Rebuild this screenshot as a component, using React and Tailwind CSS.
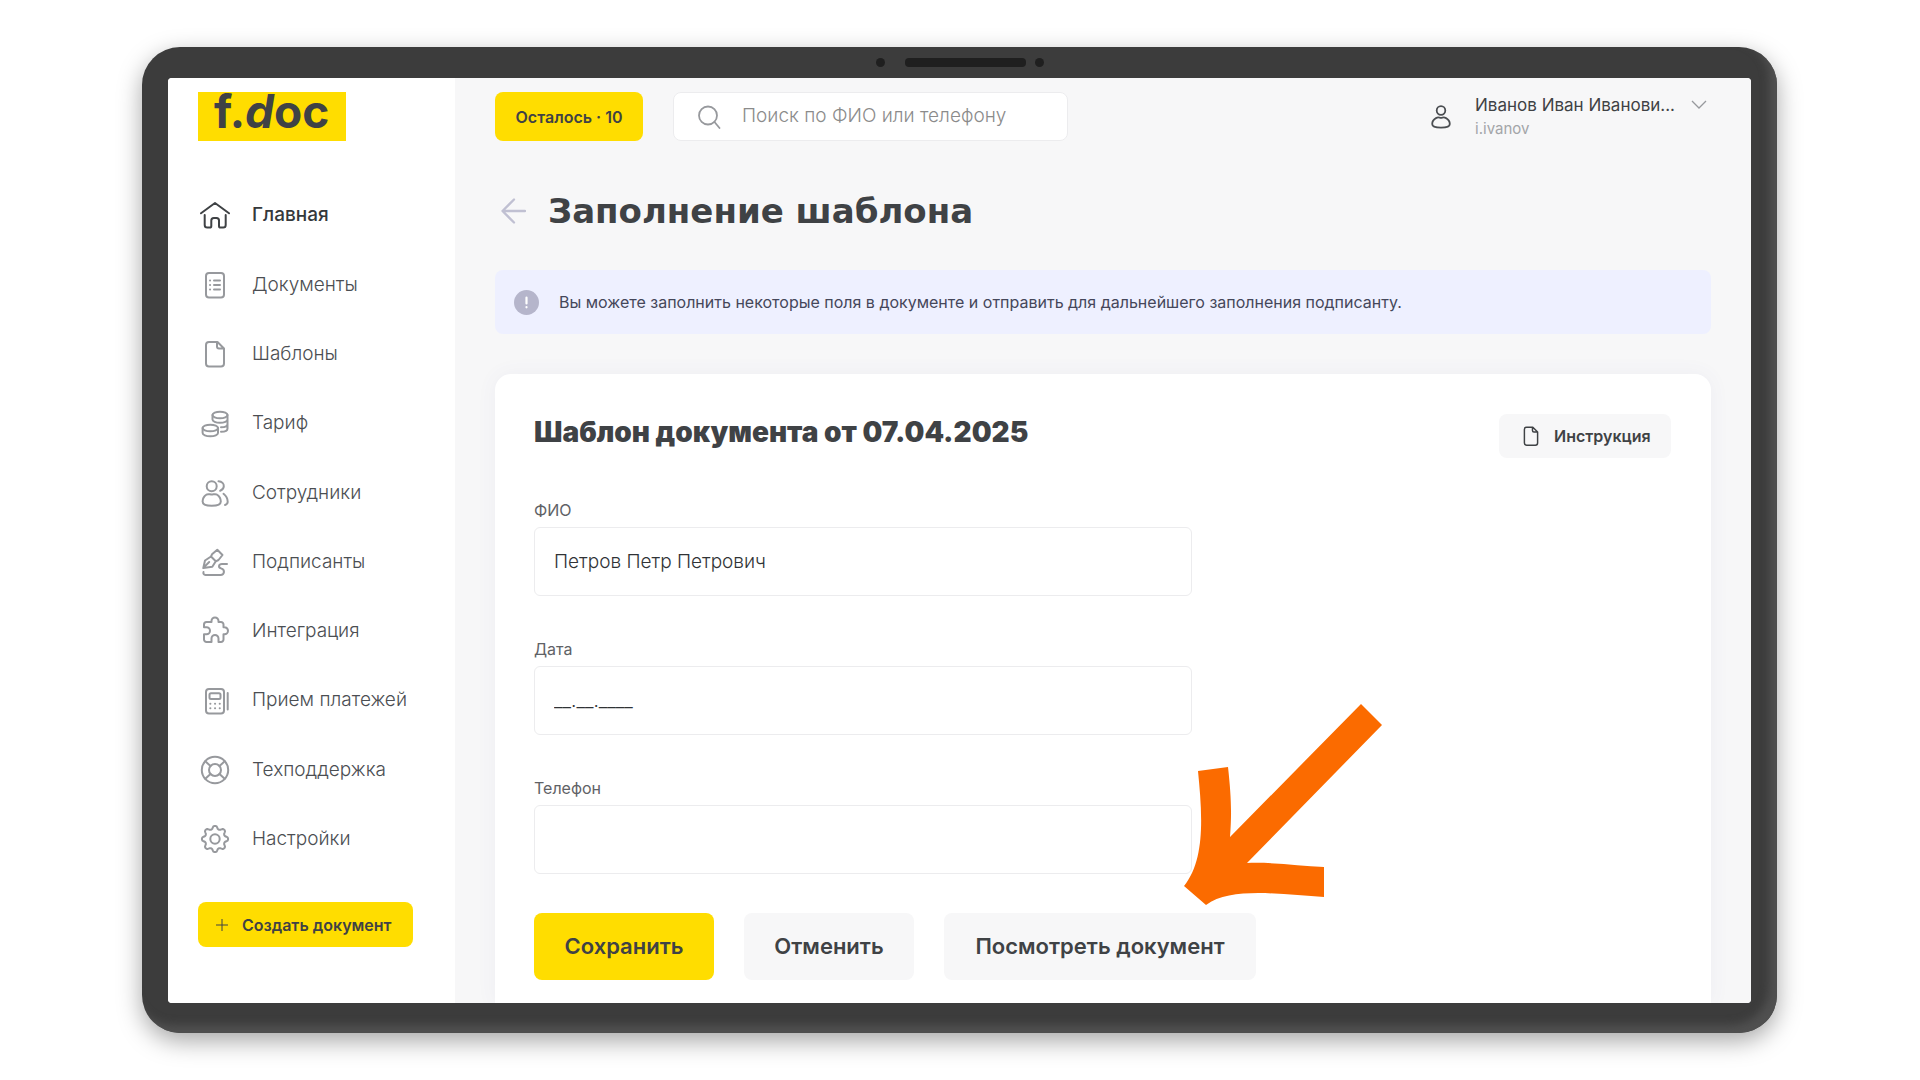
import React from "react";

const gearPath = (() => {
  const points = [];
  for (let i = 0; i < 96; i++) {
    const t = (i / 96) * Math.PI * 2;
    const wave = Math.cos(8 * t);
    const r = 11.6 + 1.5 * Math.sign(wave) * Math.pow(Math.abs(wave), 0.55);
    points.push(`${(15 + r * Math.sin(t)).toFixed(2)} ${(15 - r * Math.cos(t)).toFixed(2)}`);
  }
  return `M${points.join("L")}Z`;
})();

const filePath =
  "M9 3h8.5L24 9.500V24.500a3 3 0 0 1-3 3H9a3 3 0 0 1-3-3V6a3 3 0 0 1 3-3zM17 3v4.500a2 2 0 0 0 2 2h5";

const icons = {
  home: (
    <path d="M1 12.300 15 2l14 10.300M4.700 14v10a2.500 2.500 0 0 0 2.500 2.500h2.500a1.600 1.600 0 0 0 1.600-1.600v-5.400a2.500 2.500 0 0 1 2.500-2.500h2.700a2.500 2.500 0 0 1 2.500 2.500v5.400a1.600 1.600 0 0 0 1.600 1.600h2.600a2.500 2.500 0 0 0 2.500-2.500V14" />
  ),
  docs: (
    <>
      <rect x="6" y="3" width="18" height="24.500" rx="3" />
      <path d="M14 10.500h6M14 15h6M14 19.500h6M10 10.500h.1M10 15h.1M10 19.500h.1" />
    </>
  ),
  file: <path d={filePath} />,
  coins: (
    <>
      <ellipse cx="20" cy="6" rx="7.500" ry="3.300" />
      <path d="M12.500 6v4.500c0 1.800 3.300 3.300 7.500 3.300s7.500-1.500 7.500-3.300V6M27.500 10.500V15c0 1.800-2.500 3.300-6.500 3.300M27.500 15v4.500c0 1.800-2.500 3.300-6.500 3.300" />
      <ellipse cx="10.300" cy="19" rx="7.700" ry="3.300" />
      <path d="M2.600 19v5c0 1.800 3.400 3.300 7.700 3.300s7.700-1.500 7.700-3.300v-5" />
    </>
  ),
  users: (
    <>
      <circle cx="11.700" cy="8.300" r="5" />
      <path d="M11.700 16.500c-2-.1-4-1-5.500.2C4 18.300 2.600 21 2.600 23.500c0 3 4 4.300 9.100 4.300s9.100-1.300 9.100-4.300c0-2.500-1.400-5.200-3.600-6.800-1.500-1.200-3.500-.3-5.500-.2zM18.500 3.300c3.500.3 5.500 2.500 5.300 5-.1 2-1.500 3.700-3.600 4.500M23.500 15.800c2.500 2 4.200 5 4.200 8 0 1.500-1 2.700-2.700 3.200" />
    </>
  ),
  sign: (
    <>
      <path d="M3.300 21 5 13.500l6-4 4.800 4.800-3.500 5.500zM3.600 20.600l5.600-5.600M11 9.500l1-2.200 5.300-4.600L22.500 8l-4 5-2.700 1.300" />
      <path d="M27 17h-5c-3.500 0-4 3.400-1 4.400 4.500 1.400 3.500 6.600-.5 6.600H5.500C3.800 28 3 26.500 3.500 25" />
    </>
  ),
  puzzle: (
    <path d="M6.500 6h5V5a3.500 3.500 0 0 1 7 0v1H21a2.500 2.500 0 0 1 2.500 2.500v2.800h1a3.500 3.500 0 0 1 0 7h-1v5.200A2.500 2.500 0 0 1 21 26h-2.500v-3.500a3.500 3.500 0 0 0-7 0V26h-5A2.500 2.500 0 0 1 4 23.500v-5.200h2.500a3.500 3.500 0 0 0 0-7H4V8.500A2.500 2.500 0 0 1 6.500 6z" />
  ),
  terminal: (
    <>
      <rect x="6" y="3" width="18" height="24.500" rx="3" />
      <rect x="9.500" y="7.300" width="11" height="5.600" rx="1.500" />
      <path d="M10.300 17.700h.1M15 17.700h.1M19.700 17.700h.1M10.300 22.300h.1M15 22.300h.1M19.700 22.300h.1M27.700 7v16.500" />
    </>
  ),
  buoy: (
    <>
      <circle cx="15" cy="15" r="13.200" />
      <circle cx="15" cy="15" r="6" />
      <path d="m5.300 6.300 5.200 4.800M24.700 6.300l-5.200 4.800M5.300 23.700l5.200-4.800M24.700 23.700l-5.200-4.800" />
    </>
  ),
  gear: (
    <>
      <path d={gearPath} />
      <circle cx="15" cy="15" r="4.700" />
    </>
  ),
};

function Icon({ name, className }) {
  return (
    <svg
      viewBox="0 0 30 30"
      className={className}
      fill="none"
      stroke="currentColor"
      strokeWidth="2"
      strokeLinecap="round"
      strokeLinejoin="round"
      aria-hidden="true"
    >
      {icons[name]}
    </svg>
  );
}

const nav = [
  ["home", "Главная"],
  ["docs", "Документы"],
  ["file", "Шаблоны"],
  ["coins", "Тариф"],
  ["users", "Сотрудники"],
  ["sign", "Подписанты"],
  ["puzzle", "Интеграция"],
  ["terminal", "Прием платежей"],
  ["buoy", "Техподдержка"],
  ["gear", "Настройки"],
];

function Sidebar() {
  return (
    <aside className="w-[287px] shrink-0 bg-white pl-[30px] pt-[14px]">
      <a
        href="#"
        className="block h-[49px] w-[148px] bg-[#ffdd00] pl-4 text-[46px] leading-[38px] font-bold text-[#3f4245]"
      >
        f.<span className="italic">d</span>oc
      </a>
      <nav className="mt-10 grid h-[693px] auto-rows-fr">
        {nav.map(([icon, label], i) => (
          <a
            key={label}
            href="#"
            className={
              i === 0
                ? "flex items-center gap-[22px] pl-0.5 text-[19px] font-medium text-[#35383b]"
                : "flex items-center gap-[22px] pl-0.5 text-[19px] font-light text-[#4b4e52]"
            }
          >
            <Icon
              name={icon}
              className={i === 0 ? "size-[30px] text-[#3f4245]" : "size-[30px] text-[#97999d]"}
            />
            {label}
          </a>
        ))}
      </nav>
      <button className="mt-7 flex h-[45px] w-[215px] items-center gap-[13px] rounded-lg bg-[#ffdd00] pl-[17px] text-base font-semibold whitespace-nowrap text-[#3f4245]">
        <svg viewBox="0 0 14 14" className="size-[14px]" stroke="currentColor" aria-hidden="true">
          <path d="M7 1v12M1 7h12" />
        </svg>
        Создать документ
      </button>
    </aside>
  );
}

function Header() {
  return (
    <header className="flex h-[49px] items-center">
      <button className="h-[49px] w-[148px] rounded-lg bg-[#ffdd00] text-base font-semibold text-[#3f4245]">
        Осталось · 10
      </button>
      <label className="ml-[30px] flex h-[49px] w-[395px] items-center gap-[21px] rounded-lg border border-[#ececee] bg-white pl-[23px]">
        <svg viewBox="0 0 24 24" className="size-6 shrink-0" fill="none" stroke="#97999d" strokeWidth="1.800" strokeLinecap="round" aria-hidden="true">
          <circle cx="11" cy="10.500" r="9" />
          <path d="m17.500 17 5 6" />
        </svg>
        <input
          type="search"
          aria-label="Поиск по ФИО или телефону"
          placeholder="Поиск по ФИО или телефону"
          className="min-w-0 flex-1 bg-transparent text-[19px] font-light outline-none placeholder:text-[#8b8b8b]"
        />
      </label>
      <button className="ml-auto flex items-center pr-1 text-left">
        <svg viewBox="0 0 20 24" className="h-6 w-5" fill="none" stroke="#4b4e52" strokeWidth="1.800" strokeLinejoin="round" aria-hidden="true">
          <circle cx="10" cy="5.500" r="4.300" />
          <path d="M10 12.800c-1.700-.1-3.200-.9-4.600.1C2.500 14.500 1.200 17 1.200 19c0 2.500 3.900 3.700 8.800 3.700s8.800-1.200 8.800-3.700c0-2-1.300-4.500-4.200-6.100-1.400-1-2.900-.2-4.600-.1z" />
        </svg>
        <span className="ml-6 block">
          <span className="block text-[17px] leading-6 text-[#3f4245]">Иванов Иван Иванови...</span>
          <span className="block text-[15px] leading-6 text-[#a3a5a8]">i.ivanov</span>
        </span>
        <svg viewBox="0 0 16 10" className="mb-6 ml-4 h-[10px] w-4" fill="none" stroke="#97999d" strokeWidth="1.300" aria-hidden="true">
          <path d="m1 1 7 7 7-7" />
        </svg>
      </button>
    </header>
  );
}

function Field({ id, label, value }) {
  return (
    <div className="w-[658px]">
      <label htmlFor={id} className="block text-base leading-[34px] text-[#5f6266]">
        {label}
      </label>
      <input
        id={id}
        defaultValue={value}
        className="block h-[69px] w-full rounded-md border border-[#ececee] bg-white px-[19px] text-[19px] font-light text-[#303336] outline-none"
      />
    </div>
  );
}

function Arrow() {
  return (
    <svg viewBox="0 0 198 201" className="absolute top-[330px] left-[689px] h-[201px] w-[198px]" aria-hidden="true">
      <path
        fill="#fb6b00"
        d="M177 0 198 21 63 159C90 158 115 162 140 163V193C100 191 48 182 22 201L0 182C22 155 18 108 14 67L44 63C47 90 48 108 46 133Z"
      />
    </svg>
  );
}

function Main() {
  return (
    <main className="flex min-w-0 flex-1 flex-col bg-[#f7f7f8] px-10 pt-[14px]">
      <Header />
      <div className="mt-[46px] flex h-12 items-center pl-[6px]">
        <button aria-label="Назад">
          <svg viewBox="0 0 25 26" className="h-[26px] w-[25px]" fill="none" stroke="#c0c0d2" strokeWidth="2.300" strokeLinecap="round" strokeLinejoin="round" aria-hidden="true">
            <path d="M13 1.500 1.500 13 13 24.500M1.500 13H24" />
          </svg>
        </button>
        <h1 className="ml-[22px] font-['DejaVu_Sans',sans-serif] text-[34px] font-bold text-[#3f4245]">
          Заполнение шаблона
        </h1>
      </div>
      <div className="mt-[35px] flex h-16 items-center rounded-lg bg-[#eef0ff] pl-[19px] text-base text-[#45475a]">
        <svg viewBox="0 0 25 25" className="mr-5 size-[25px]" aria-hidden="true">
          <circle cx="12.500" cy="12.500" r="12.500" fill="#b5b5cb" />
          <path d="M12.500 7.500v6M12.500 17v.3" stroke="#fff" strokeWidth="2.200" strokeLinecap="round" />
        </svg>
        Вы можете заполнить некоторые поля в документе и отправить для дальнейшего заполнения подписанту.
      </div>
      <section className="relative mt-10 flex-1 rounded-t-2xl bg-white pt-10 pr-10 pb-[23px] pl-[39px] shadow-[0_0_20px_rgba(90,90,150,0.060)]">
        <div className="flex items-start justify-between">
          <h2 className="text-[28px] leading-9 font-black text-[#3f4245]">Шаблон документа от 07.04.2025</h2>
          <button className="flex h-[44px] w-[172px] items-center gap-3 rounded-lg bg-[#f7f7f8] pl-[21px] text-base font-semibold text-[#3f4245]">
            <Icon name="file" className="size-[22px]" />
            Инструкция
          </button>
        </div>
        <form className="mt-[35px]">
          <div className="flex flex-col gap-[36px]">
            <Field id="fio" label="ФИО" value="Петров Петр Петрович" />
            <Field id="date" label="Дата" value="__.__.____" />
            <Field id="phone" label="Телефон" value="" />
          </div>
          <div className="mt-[39px] flex gap-[30px] text-[22px] font-semibold text-[#3f4245]">
            <button type="button" className="h-[67px] w-[180px] rounded-lg bg-[#ffdd00]">Сохранить</button>
            <button type="button" className="h-[67px] w-[170px] rounded-lg bg-[#f7f7f8]">Отменить</button>
            <button type="button" className="h-[67px] w-[312px] rounded-lg bg-[#f7f7f8]">Посмотреть документ</button>
          </div>
        </form>
        <Arrow />
      </section>
    </main>
  );
}

export default function App() {
  return (
    <div className="min-h-screen bg-white pt-[47px] pr-[143px] pb-[47px] pl-[142px] font-['Inter','Noto_Sans',sans-serif]">
      <div className="rounded-[38px] bg-[#3c3c3c] px-[26px] pb-[30px] shadow-[inset_-8px_-8px_8px_#505050,0_8px_24px_rgba(0,0,0,0.350)]">
        <div className="flex h-[31px] items-center justify-center">
          <span className="size-[9px] rounded-full bg-[#1f1f1f]" />
          <span className="mr-[9px] ml-5 h-[9px] w-[121px] rounded bg-[#1f1f1f]" />
          <span className="size-[9px] rounded-full bg-[#1f1f1f]" />
        </div>
        <div className="flex overflow-hidden rounded-sm bg-white">
          <Sidebar />
          <Main />
        </div>
      </div>
    </div>
  );
}
